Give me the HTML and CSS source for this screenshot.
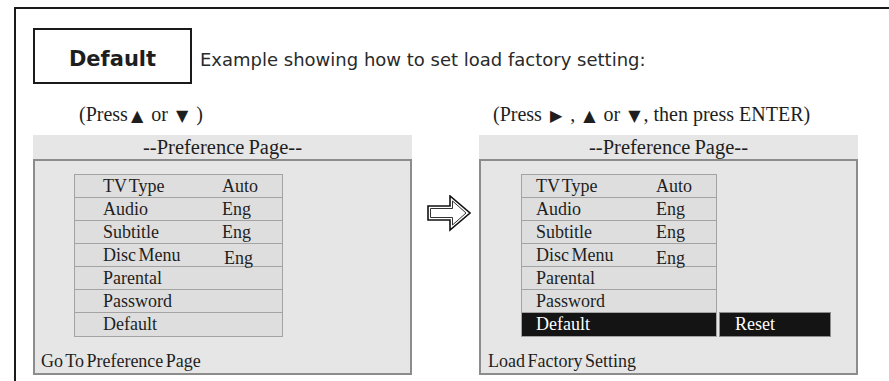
FILE: index.html
```html
<!DOCTYPE html>
<html lang="en">
<head>
  <meta charset="UTF-8" />
  <title>Default - Load Factory Setting</title>
  <link rel="stylesheet" href="styles.css">
</head>
<body>
  <div class="frame">
    <div class="intro">
      <div class="tag">Default</div>
      <p class="lead">Example showing how to set load factory setting:</p>
    </div>

    <div class="steps">
      <div class="step">
        <p class="hint hint-left">(Press<span class="key">▲</span> or <span class="key">▼</span> )</p>
        <div class="screen">
          <div class="screen-title">--Preference Page--</div>
          <div class="screen-body">
            <div class="menu menu-left">
              <div class="row"><span class="label">TV Type</span><span class="value">Auto</span></div>
              <div class="row"><span class="label">Audio</span><span class="value">Eng</span></div>
              <div class="row"><span class="label">Subtitle</span><span class="value">Eng</span></div>
              <div class="row"><span class="label">Disc Menu</span><span class="value value-low">Eng</span></div>
              <div class="row"><span class="label">Parental</span></div>
              <div class="row"><span class="label">Password</span></div>
              <div class="row"><span class="label">Default</span></div>
            </div>
            <p class="status">Go To Preference Page</p>
          </div>
        </div>
      </div>

      <div class="arrow">
        <svg width="46" height="38" viewBox="0 0 46 38">
          <polygon points="1,11 23,11 23,1 43,18 23,35 23,25 1,25" fill="#fff" stroke="#111" stroke-width="1.6" />
          <polygon points="3.5,13.5 25.5,13.5 25.5,6 39,18 25.5,30 25.5,22.5 3.5,22.5" fill="none" stroke="#333" stroke-width="1" />
        </svg>
      </div>

      <div class="step">
        <p class="hint hint-right">(Press <span class="key">▶</span> , <span class="key">▲</span> or <span class="key">▼</span>, then press ENTER)</p>
        <div class="screen">
          <div class="screen-title">--Preference Page--</div>
          <div class="screen-body body-right">
            <div class="menu-wrap">
              <div class="menu menu-right">
                <div class="row"><span class="label">TV Type</span><span class="value">Auto</span></div>
                <div class="row"><span class="label">Audio</span><span class="value">Eng</span></div>
                <div class="row"><span class="label">Subtitle</span><span class="value">Eng</span></div>
                <div class="row"><span class="label">Disc Menu</span><span class="value value-low">Eng</span></div>
                <div class="row"><span class="label">Parental</span></div>
                <div class="row"><span class="label">Password</span></div>
                <div class="row row-active"><span class="label">Default</span></div>
              </div>
              <div class="option">Reset</div>
            </div>
            <p class="status">Load Factory Setting</p>
          </div>
        </div>
      </div>
    </div>
  </div>
</body>
</html>
```

FILE: styles.css
```css
body {
  margin: 0;
  background: #fff;
  color: #1e1e1e;
  overflow: hidden;
  font-family: "Liberation Serif", "Times New Roman", serif;
}

.frame {
  margin: 7px 0 0 14px;
  height: calc(100vh - 7px);
  box-sizing: border-box;
  padding: 19px 0 0 17px;
  border-top: 2px solid #1a1a1a;
  border-left: 2px solid #1a1a1a;
}

.intro {
  display: flex;
  align-items: flex-start;
}

.tag {
  width: 159px;
  height: 56px;
  box-sizing: border-box;
  border: 2px solid #1a1a1a;
  padding-top: 5px;
  display: flex;
  align-items: center;
  justify-content: center;
  font-family: "DejaVu Sans", Verdana, sans-serif;
  font-weight: bold;
  font-size: 21px;
}

.lead {
  margin: 21px 0 0 8px;
  font-family: "DejaVu Sans", Verdana, sans-serif;
  font-size: 18px;
  line-height: 22px;
  color: #2a2a2a;
}

.steps {
  display: flex;
  margin-top: 19px;
}

.step {
  width: 379px;
}

.hint {
  margin: 0 0 8px;
  font-size: 20px;
  line-height: 22px;
}

.hint-left {
  padding-left: 46px;
}

.hint-right {
  padding-left: 14px;
}

.key {
  font-family: "DejaVu Sans", sans-serif;
  font-size: 16px;
  margin: 0 3px;
}

.arrow {
  width: 67px;
  padding: 92px 0 0 15px;
  box-sizing: border-box;
}

.screen-title {
  height: 24px;
  line-height: 24px;
  background: #e6e6e6;
  text-align: center;
  font-size: 20.5px;
  word-spacing: -1px;
}

.screen-body {
  height: 216px;
  box-sizing: border-box;
  background: #e6e6e6;
  border: 2px solid #8c8c8c;
  padding: 13px 0 0 6px;
}

.body-right {
  padding-left: 7px;
}

.menu {
  border: 1px solid #a3a3a3;
  background: #dedede;
  font-size: 18px;
  word-spacing: -2px;
}

.menu-left {
  width: 209px;
  margin-left: 33px;
  box-sizing: border-box;
}

.menu-right {
  width: 196px;
  box-sizing: border-box;
}

.menu-wrap {
  display: flex;
  align-items: flex-end;
  gap: 2px;
  margin-left: 33px;
}

.row {
  display: flex;
  align-items: flex-start;
  height: 22px;
  line-height: 22px;
  border-bottom: 1px solid #a3a3a3;
}

.row:last-child {
  border-bottom: none;
  height: 23px;
}

.menu-left .row {
  padding-left: 28px;
}

.menu-left .label {
  width: 119px;
}

.menu-right .row {
  padding-left: 14px;
}

.menu-right .label {
  width: 120px;
}

.value-low {
  margin: 3px 0 0 2px;
}

.menu-right .value-low {
  margin-left: 0;
}

.row-active {
  background: #141414;
  color: #fff;
}

.option {
  width: 112px;
  height: 25px;
  box-sizing: border-box;
  line-height: 22px;
  padding-left: 15px;
  background: #141414;
  border: 1px solid #8c8c8c;
  color: #fff;
  font-size: 18px;
}

.status {
  margin: 13px 0 0;
  font-size: 18px;
  line-height: 22px;
  word-spacing: -2px;
}
```
